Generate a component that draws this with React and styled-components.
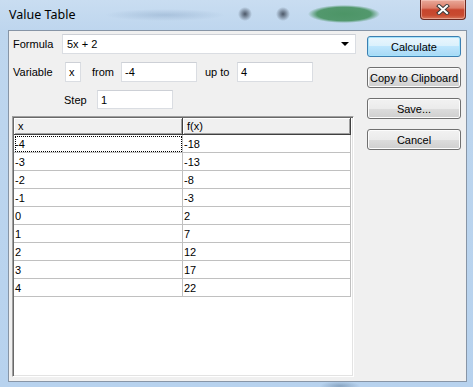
import React from "react";
import styled, { createGlobalStyle } from "styled-components";

const GlobalStyle = createGlobalStyle`
  html, body {
    margin: 0;
    padding: 0;
    background: #ffffff;
  }
  body {
    font-family: "Liberation Sans", Arial, sans-serif;
    font-size: 11px;
    color: #000000;
  }
`;

const Window = styled.div`
  width: 473px;
  height: 387px;
  box-sizing: border-box;
  padding: 0 6px 5px 8px;
  display: flex;
  flex-direction: column;
  background-color: #bcd5ee;
  background-image:
    radial-gradient(circle at 245px 14px, rgba(55, 65, 80, 0.85) 0, rgba(55, 65, 80, 0.5) 3px, rgba(55, 65, 80, 0) 7px),
    radial-gradient(circle at 283px 14px, rgba(55, 65, 80, 0.85) 0, rgba(55, 65, 80, 0.5) 3px, rgba(55, 65, 80, 0) 7px),
    radial-gradient(ellipse 36px 9px at 344px 14px, rgba(70, 145, 95, 0.95) 0, rgba(70, 145, 95, 0.9) 75%, rgba(70, 145, 95, 0) 100%),
    radial-gradient(ellipse 60px 6px at 165px 15px, rgba(120, 150, 185, 0.35) 0, rgba(120, 150, 185, 0) 100%),
    radial-gradient(ellipse 20px 5px at 340px 386px, rgba(90, 120, 150, 0.5) 0, rgba(90, 120, 150, 0) 100%),
    linear-gradient(180deg, #c9ddf1 0px, #bed6ee 30px, #b7d2ee 100%);
`;

const TitleBar = styled.div`
  height: 30px;
  display: flex;
  align-items: flex-start;
`;

const Title = styled.div`
  padding: 6px 0 0 1px;
  font-family: "Noto Sans", "Open Sans", sans-serif;
  font-size: 12.5px;
  color: #000000;
`;

const CloseButton = styled.div`
  margin-left: auto;
  margin-right: 1px;
  width: 46px;
  height: 20px;
  box-sizing: border-box;
  border: 1px solid #6b2a22;
  border-top: none;
  border-radius: 0 0 4px 4px;
  background: linear-gradient(180deg, #e9a99a 0%, #dc7d69 42%, #c7452d 52%, #c84a30 80%, #d7775d 100%);
  box-shadow: inset 0 0 0 1px rgba(255, 220, 210, 0.45);
  display: flex;
  align-items: center;
  justify-content: center;
`;

const Client = styled.div`
  flex: 1;
  display: flex;
  background: #f0f0f0;
  border: 1px solid #8795a6;
`;

const LeftPane = styled.div`
  width: 347px;
  padding: 3px 0 0 4px;
  box-sizing: border-box;
  display: flex;
  flex-direction: column;
`;

const Row = styled.div`
  display: flex;
  align-items: center;
  margin-top: ${(p) => p.$mt || 0}px;
`;

const Label = styled.div`
  width: ${(p) => p.$w}px;
  margin-left: ${(p) => p.$ml || 0}px;
  flex-shrink: 0;
`;

const TextBox = styled.div`
  width: ${(p) => p.$w}px;
  height: ${(p) => p.$h || 20}px;
  box-sizing: border-box;
  flex-shrink: 0;
  padding-left: ${(p) => p.$pl || 3}px;
  display: flex;
  align-items: center;
  background: #ffffff;
  border: 1px solid #dadde2;
  border-top-color: #cdd0d6;
`;

const Combo = styled(TextBox)`
  padding-right: 6px;
  justify-content: space-between;
`;

const Arrow = styled.div`
  width: 0;
  height: 0;
  border-left: 4px solid transparent;
  border-right: 4px solid transparent;
  border-top: 4px solid #000000;
`;

const Grid = styled.div`
  margin: 7px 0 0 -1px;
  width: 342px;
  height: 261px;
  box-sizing: border-box;
  background: #ffffff;
  border: 1px solid;
  border-color: #a0a0a0 #ffffff #ffffff #a0a0a0;
  box-shadow: inset 1px 1px 0 #696969, inset -1px -1px 0 #e3e3e3;
  padding: 1px;
`;

const Table = styled.div`
  display: grid;
  grid-template-columns: 169px 168px;
`;

const HeadCell = styled.div`
  height: 17px;
  box-sizing: border-box;
  padding-left: 4px;
  display: flex;
  align-items: center;
  background: #f0f0f0;
  border-right: 1px solid #404040;
  border-bottom: 1px solid #404040;
  box-shadow: inset 1px 1px 0 #ffffff, inset -1px -1px 0 #a0a0a0;
`;

const Cell = styled.div`
  height: 18px;
  box-sizing: border-box;
  padding-left: 1px;
  display: flex;
  align-items: center;
  border-right: 1px solid #c0c0c0;
  border-bottom: 1px solid #c0c0c0;
  outline: ${(p) => (p.$focus ? "1px dotted #000000" : "none")};
  outline-offset: -2px;
`;

const RightPane = styled.div`
  margin-left: 11px;
  padding-top: 5px;
  display: flex;
  flex-direction: column;
  gap: 10px;
`;

const Button = styled.div`
  width: 94px;
  height: 21px;
  box-sizing: border-box;
  display: flex;
  align-items: center;
  justify-content: center;
  border-radius: 3px;
  border: 1px solid ${(p) => (p.$primary ? "#3c7fb1" : "#707070")};
  background: ${(p) =>
    p.$primary
      ? "linear-gradient(180deg, #eaf6fd 0%, #d9f0fc 50%, #bee6fd 50%, #a7d9f5 100%)"
      : "linear-gradient(180deg, #f2f2f2 0%, #ebebeb 50%, #dddddd 50%, #cfcfcf 100%)"};
  box-shadow: inset 0 0 0 1px ${(p) => (p.$primary ? "#a6e3fb" : "#fcfcfc")};
`;

const xs = [-4, -3, -2, -1, 0, 1, 2, 3, 4];

export default function App() {
  return (
    <>
      <GlobalStyle />
      <Window>
        <TitleBar>
          <Title>Value Table</Title>
          <CloseButton>
            <svg width="14" height="11" viewBox="0 0 14 11">
              <path d="M3 2 L11 9 M11 2 L3 9" stroke="#3b3b3b" strokeWidth="4" strokeLinecap="square" />
              <path d="M3 2 L11 9 M11 2 L3 9" stroke="#ffffff" strokeWidth="2" strokeLinecap="square" />
            </svg>
          </CloseButton>
        </TitleBar>
        <Client>
          <LeftPane>
            <Row>
              <Label $w={49}>Formula</Label>
              <Combo $w={294} $pl={4}>
                <span>5x + 2</span>
                <Arrow />
              </Combo>
            </Row>
            <Row $mt={8}>
              <Label $w={52}>Variable</Label>
              <TextBox $w={16}>x</TextBox>
              <Label $w={29} $ml={11}>from</Label>
              <TextBox $w={76}>-4</TextBox>
              <Label $w={32} $ml={8}>up to</Label>
              <TextBox $w={76}>4</TextBox>
            </Row>
            <Row $mt={8}>
              <Label $w={33} $ml={51}>Step</Label>
              <TextBox $w={76} $h={19}>1</TextBox>
            </Row>
            <Grid>
              <Table>
                <HeadCell>x</HeadCell>
                <HeadCell>f(x)</HeadCell>
                {xs.map((x, i) => (
                  <React.Fragment key={x}>
                    <Cell $focus={i === 0}>{x}</Cell>
                    <Cell>{5 * x + 2}</Cell>
                  </React.Fragment>
                ))}
              </Table>
            </Grid>
          </LeftPane>
          <RightPane>
            <Button $primary>Calculate</Button>
            <Button>Copy to Clipboard</Button>
            <Button>Save...</Button>
            <Button>Cancel</Button>
          </RightPane>
        </Client>
      </Window>
    </>
  );
}
